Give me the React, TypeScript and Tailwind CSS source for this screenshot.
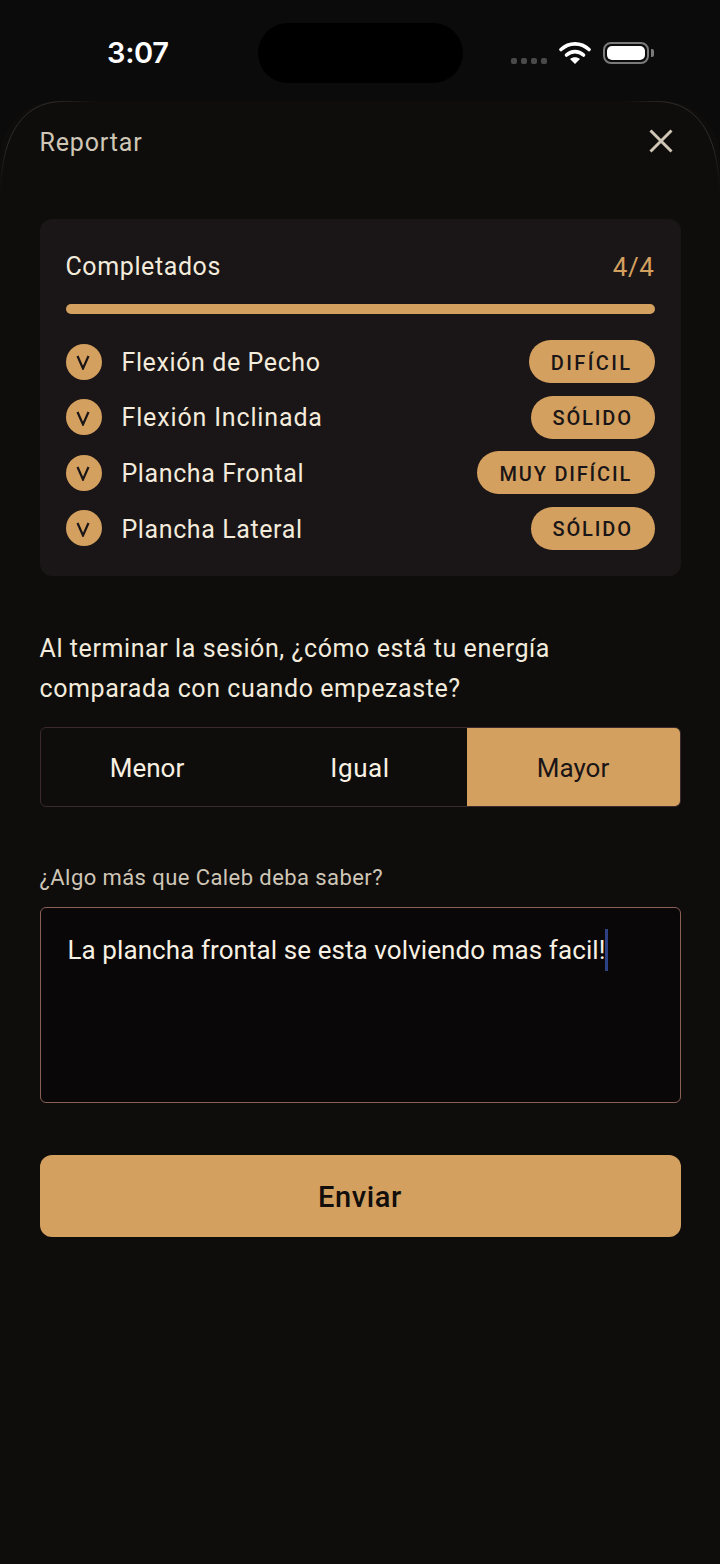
const FONT = "font-['Roboto','Noto_Sans',sans-serif]";

const items = [
  { name: "Flexión de Pecho", level: "DIFÍCIL", pill: "px-[22px] tracking-[2.4px]", label: "tracking-[0.6px]" },
  { name: "Flexión Inclinada", level: "SÓLIDO", pill: "px-[21.5px] tracking-[1.9px]", label: "tracking-[0.85px]" },
  { name: "Plancha Frontal", level: "MUY DIFÍCIL", pill: "px-[22.5px] tracking-[1.8px]", label: "tracking-[0.6px]" },
  { name: "Plancha Lateral", level: "SÓLIDO", pill: "px-[21.5px] tracking-[1.9px]", label: "tracking-[0.6px]" },
];

function StatusBar() {
  return (
    <div className="relative h-[101px] shrink-0">
      <div className="absolute left-[258px] top-[23px] h-[60px] w-[205px] rounded-[30px] bg-black" />
      <div className="absolute left-[107px] top-[35px] text-[29px] leading-[36px] font-semibold text-white font-['Inter',sans-serif] tracking-[-0.3px]">3:07</div>
      <div className="absolute left-[511px] top-[58px] flex gap-[4px]">
        {[0, 1, 2, 3].map((i) => (
          <div key={i} className="h-[6px] w-[6px] rounded-[2px] bg-[#4a4a4a]" />
        ))}
      </div>
      <svg className="absolute left-[559px] top-[41px]" width="32" height="23" viewBox="0 0 32 23" fill="none">
        <path d="M2 8.5C10 1 22 1 30 8.5" stroke="#fff" strokeWidth="3.6" strokeLinecap="round" />
        <path d="M7.5 14C12.5 9.5 19.5 9.5 24.5 14" stroke="#fff" strokeWidth="3.6" strokeLinecap="round" />
        <path d="M16 23L11 18C14 15.8 18 15.8 21 18Z" fill="#fff" />
      </svg>
      <div className="absolute left-[603px] top-[42px] flex items-center">
        <div className="h-[22px] w-[46px] rounded-[8px] border-2 border-[#7a7a7a] p-[2px]">
          <div className="h-full w-full rounded-[5px] bg-white" />
        </div>
        <div className="ml-[2px] h-[8px] w-[3px] rounded-r-[2px] bg-[#7a7a7a]" />
      </div>
    </div>
  );
}

function Check() {
  return (
    <div className="flex h-[36px] w-[36px] shrink-0 items-center justify-center rounded-full bg-[#d4a05f]">
      <svg className="ml-[-2px] mt-[2px]" width="14" height="15" viewBox="0 0 14 15" fill="none">
        <path d="M1.5 1L7 13.5L12.5 1" stroke="#1a1516" strokeWidth="2.2" />
      </svg>
    </div>
  );
}

function SheetEdge() {
  return (
    <svg className="pointer-events-none absolute left-0 top-0" width="720" height="100" viewBox="0 0 720 100" fill="none">
      <defs>
        <linearGradient id="edgeL" x1="0" y1="90" x2="95" y2="0" gradientUnits="userSpaceOnUse">
          <stop offset="0" stopColor="#2e2c2a" stopOpacity="0" />
          <stop offset="0.3" stopColor="#2e2c2a" />
          <stop offset="0.75" stopColor="#2e2c2a" />
          <stop offset="1" stopColor="#2e2c2a" stopOpacity="0" />
        </linearGradient>
        <linearGradient id="edgeR" x1="720" y1="90" x2="625" y2="0" gradientUnits="userSpaceOnUse">
          <stop offset="0" stopColor="#2e2c2a" stopOpacity="0" />
          <stop offset="0.3" stopColor="#2e2c2a" />
          <stop offset="0.75" stopColor="#2e2c2a" />
          <stop offset="1" stopColor="#2e2c2a" stopOpacity="0" />
        </linearGradient>
      </defs>
      <path d="M95 0.5H60C25 2 2 30 0.5 90" stroke="url(#edgeL)" />
      <path d="M625 0.5H660C695 2 718 30 719.5 90" stroke="url(#edgeR)" />
    </svg>
  );
}

export default function App() {
  return (
    <div className={`flex h-[1564px] w-[720px] flex-col overflow-hidden bg-[#0c0b0b] ${FONT}`}>
      <StatusBar />
      <div className="relative flex flex-1 flex-col rounded-t-[56px] bg-[#0e0d0c] px-[39.5px]">
        <SheetEdge />
        <div className="flex h-[82px] items-center justify-between pr-[8px]">
          <span className="pt-[2px] text-[25px] tracking-[0.85px] text-[#cfc6b6]">Reportar</span>
          <svg className="mt-[-2px]" width="24" height="24" viewBox="0 0 24 24" fill="none">
            <path d="M1.5 1.5L22.5 22.5M22.5 1.5L1.5 22.5" stroke="#cfc6b6" strokeWidth="3" />
          </svg>
        </div>
        <div className="mt-[36px] rounded-[12px] bg-[#1a1516] px-[26px] pb-[26px] pt-[27px]">
          <div className="flex h-[40px] items-center justify-between pt-[2px] text-[25px]">
            <span className="tracking-[0.6px] text-[#f3ebdc]">Completados</span>
            <span className="text-[26px] tracking-[0.6px] text-[#d4a05f]">4/4</span>
          </div>
          <div className="mt-[18px] h-[10px] rounded-full bg-[#d4a05f]" />
          <div className="mt-[26px] flex flex-col gap-[12.6px]">
            {items.map((it) => (
              <div key={it.name} className="flex h-[43px] items-center">
                <Check />
                <span className={`ml-[20px] flex-1 pt-[2px] text-[25px] text-[#f3ebdc] ${it.label}`}>{it.name}</span>
                <span className={`flex h-[43px] items-center rounded-full bg-[#d4a05f] pt-[2px] text-[20px] font-medium text-[#1a1516] ${it.pill}`}>{it.level}</span>
              </div>
            ))}
          </div>
        </div>
        <p className="mt-[53px] text-[25px] leading-[40px] tracking-[0.58px] text-[#f3ebdc]">
          Al terminar la sesión, ¿cómo está tu energía
          <br />
          comparada con cuando empezaste?
        </p>
        <div className="mt-[18px] grid h-[80px] grid-cols-[213px_213px_1fr] overflow-hidden rounded-[6px] border border-[#3a2a2a] text-[26px]">
          <div className="flex items-center justify-center pt-[3px] text-[#f8f0e2]">Menor</div>
          <div className="flex items-center justify-center pt-[3px] tracking-[0.6px] text-[#f8f0e2]">Igual</div>
          <div className="flex items-center justify-center bg-[#d4a05f] pt-[3px] text-[#1a1516]">Mayor</div>
        </div>
        <label className="mt-[56px] block text-[22px] leading-[30px] tracking-[0.42px] text-[#cfc6b6]">¿Algo más que Caleb deba saber?</label>
        <div className="mt-[14px] h-[196px] rounded-[6px] border border-[#8a5f55] bg-[#090708] px-[27px] pt-[17px]">
          <div className="flex items-center text-[26px] leading-[50px] tracking-[0.08px] text-[#f8f0e2]">
            La plancha frontal se esta volviendo mas facil!
            <span className="h-[42px] w-[3px] bg-[#2c4285]" />
          </div>
        </div>
        <button className="mt-[52px] h-[82px] rounded-[12px] bg-[#d4a05f] pt-[3px] text-[29px] font-medium tracking-[0.6px] text-[#120e0c]">Enviar</button>
      </div>
    </div>
  );
}
